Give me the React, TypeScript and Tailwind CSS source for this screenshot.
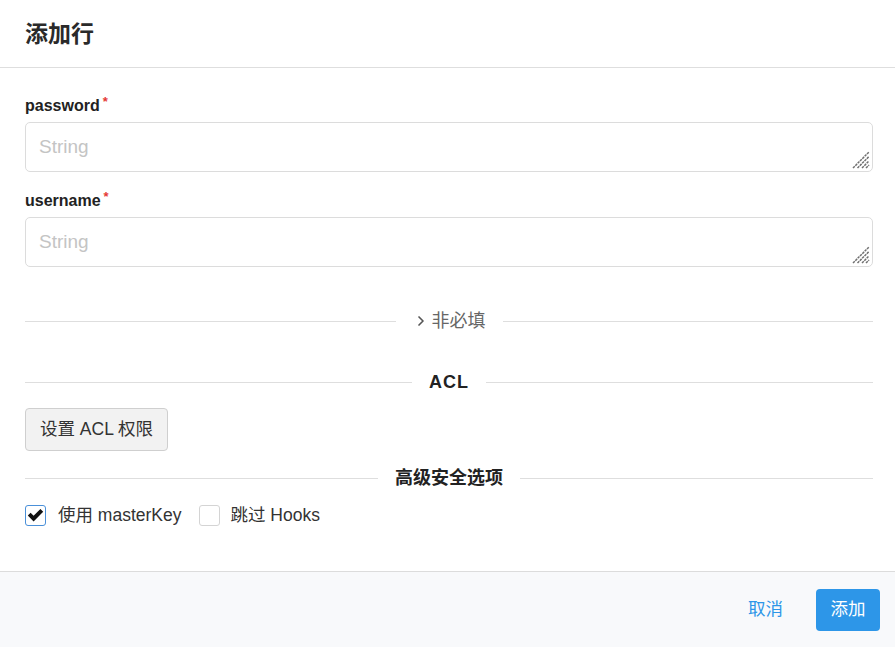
import { ChevronRight } from 'lucide-react'

const font = { fontFamily: '"Liberation Sans", Arial, "Noto Sans CJK SC", sans-serif' }

function Grip() {
  return (
    <svg
      className="pointer-events-none absolute bottom-[3px] right-[3px]"
      width="18"
      height="18"
      viewBox="0 0 18 18"
      stroke="#707070"
      strokeWidth="1.5"
      strokeDasharray="2.5 0.8"
    >
      <line x1="1" y1="17" x2="17" y2="1" />
      <line x1="5.5" y1="17" x2="17" y2="5.5" />
      <line x1="10" y1="17" x2="17" y2="10" />
      <line x1="14" y1="17" x2="17" y2="14" />
    </svg>
  )
}

function Field({ label }: { label: string }) {
  return (
    <div className="flex flex-col">
      <label className="flex items-start text-[16px] font-bold leading-[20px] text-[#222]">
        {label}
        <span className="ml-[3px] -mt-[4px] text-[13px] text-[#e53935]">*</span>
      </label>
      <div className="relative mt-[6px]">
        <textarea
          rows={1}
          placeholder="String"
          className="block h-[50px] w-full resize-none rounded-[5px] border border-[#dcdcdc] px-[13px] py-[12px] text-[19px] leading-[23px] text-[#333] outline-none placeholder:text-[#c4c4c4]"
        />
        <Grip />
      </div>
    </div>
  )
}

function Divider({ children, className = '' }: { children: React.ReactNode; className?: string }) {
  return (
    <div className={`flex items-center ${className}`}>
      <div className="h-px flex-1 bg-[#dedede]" />
      <div className="px-[17px] leading-[24px]">{children}</div>
      <div className="h-px flex-1 bg-[#dedede]" />
    </div>
  )
}

export default function App() {
  return (
    <div className="flex h-[647px] w-[895px] flex-col bg-white" style={font}>
      <div className="flex h-[68px] shrink-0 items-center border-b border-[#dedede] px-[25px] pt-[2px]">
        <h1 className="text-[23px] font-bold text-[#2a2a2a]">添加行</h1>
      </div>

      <div className="flex flex-1 flex-col pl-[25px] pr-[22px] pt-[28px]">
        <Field label="password" />
        <div className="mt-[19px]">
          <Field label="username" />
        </div>

        <Divider className="mt-[42px]">
          <div className="flex items-center gap-[3px] text-[18px] text-[#666]">
            <ChevronRight size={16} strokeWidth={2.5} className="text-[#555]" />
            非必填
          </div>
        </Divider>

        <Divider className="mt-[37px]">
          <span className="text-[18px] font-bold tracking-[1px] text-[#222]">ACL</span>
        </Divider>

        <div className="mt-[13px]">
          <button className="h-[43px] rounded-[4px] border border-[#cfcfcf] bg-[#f2f2f2] px-[14px] text-[17.5px] text-[#333]">
            设置 ACL 权限
          </button>
        </div>

        <Divider className="mt-[15px]">
          <span className="text-[18px] font-bold text-[#222]">高级安全选项</span>
        </Divider>

        <div className="mt-[11px] flex items-center text-[17.5px] text-[#333]">
          <span className="flex h-[21px] w-[21px] items-center justify-center rounded-[3px] border border-[#4a90d9]">
            <svg width="17" height="14" viewBox="0 0 17 14">
              <path d="M0.8 7.6 L3.6 4.8 L6.6 7.8 L13.4 1 L16.2 3.8 L6.6 13.4 Z" fill="#111" />
            </svg>
          </span>
          <span className="ml-[12px]">使用 masterKey</span>
          <span className="ml-[17px] h-[21px] w-[21px] rounded-[3px] border border-[#d4d4d4]" />
          <span className="ml-[11px]">跳过 Hooks</span>
        </div>
      </div>

      <div className="flex h-[76px] shrink-0 items-center justify-end gap-[33px] border-t border-[#dcdcdc] bg-[#f8f9fb] pr-[15px]">
        <button className="text-[17.5px] text-[#2d96e8]">取消</button>
        <button className="h-[42px] w-[64px] rounded-[4px] bg-[#2d96e8] text-[17.5px] text-white">添加</button>
      </div>
    </div>
  )
}
